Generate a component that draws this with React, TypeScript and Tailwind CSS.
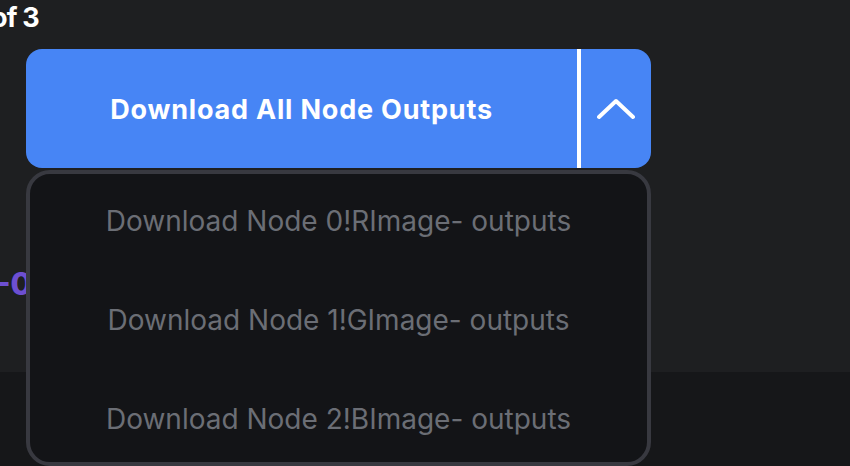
import React from 'react';

const items = [
  'Download Node 0!RImage- outputs',
  'Download Node 1!GImage- outputs',
  'Download Node 2!BImage- outputs',
];

export default function App() {
  return (
    <div className="relative w-[850px] h-[466px] overflow-hidden bg-[#161719] font-['Inter',sans-serif]">
      {/* Page */}
      <div className="h-[372px] bg-[#1e1f21] flex flex-col">
        <div className="-ml-[9px] pt-[3px] text-[27px] leading-[30px] font-bold text-white tracking-[-0.8px]">of 3</div>

        <div className="mt-[16px] ml-[26px] w-[625px] h-[119px] flex rounded-[16px] bg-[#4785f5] overflow-hidden">
          <button className="flex-1 flex items-center justify-center pt-[3px] text-white text-[27px] font-bold tracking-[0.8px]">
            Download All Node Outputs
          </button>
          <div className="w-[4px] bg-white" />
          <button className="w-[70px] flex items-center justify-center">
            <svg width="38" height="22" viewBox="0 0 38 22" fill="none">
              <path d="M2 19 L19 3 L36 19" stroke="white" strokeWidth="4" strokeLinecap="round" strokeLinejoin="round" />
            </svg>
          </button>
        </div>

        <div className="mt-[98px] -ml-[4px] text-[31px] leading-[36px] font-extrabold text-[#6d4fd1]">-0</div>
      </div>

      {/* Menu */}
      <div className="absolute left-[26px] top-[170px] w-[625px] h-[296px] rounded-[24px] border-4 border-[#383940] bg-[#131417] overflow-hidden">
        <div className="-mt-[3px] flex flex-col">
          {items.map((t) => (
            <div key={t} className="h-[99px] shrink-0 flex items-center justify-center text-[28px] text-[#6b6e75]">
              {t}
            </div>
          ))}
        </div>
      </div>
    </div>
  );
}
